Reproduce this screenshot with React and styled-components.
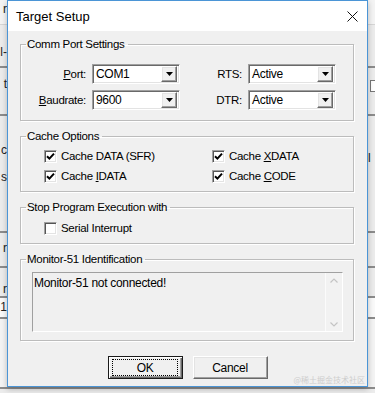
import React from 'react'
import styled, { createGlobalStyle } from 'styled-components'

const Global = createGlobalStyle`
  html, body { margin: 0; padding: 0; }
  body {
    width: 375px;
    height: 393px;
    overflow: hidden;
    background: #ececec;
    font-family: "Liberation Sans", Arial, sans-serif;
    font-size: 11.5px;
    letter-spacing: -0.3px;
  }
`;

const Desk = styled.div`
  position: relative;
  width: 375px;
  height: 393px;
  overflow: hidden;
`;

/* the window behind the dialog, only its edges show */
const Backdrop = styled.div`
  display: flex;
  flex-direction: column;
  height: 100%;
`;

const BackRow = styled.div`
  display: flex;
  justify-content: space-between;
  height: ${p => p.h}px;
  flex: none;
  box-sizing: border-box;
  background: ${p => p.bg || '#ececec'};
  border-bottom: ${p => p.line ? '2px solid #8c8c8c' : '1px solid #d6d6d6'};
  font-size: 12px;
  letter-spacing: 0;
  color: #222;
`;

const Edge = styled.div`
  width: 7px;
  overflow: hidden;
  display: flex;
  flex-direction: column;
  align-items: ${p => p.right ? 'flex-start' : 'flex-end'};
  padding-top: ${p => p.top || 0}px;
  gap: ${p => p.gap || 0}px;
  line-height: 13px;
`;

const BackBox = styled.span`
  display: inline-block;
  width: 10px;
  height: 10px;
  margin-left: 2px;
  border: 1px solid #777;
  background: #fff;
`;

const Dialog = styled.div`
  position: absolute;
  left: 7px;
  top: 0;
  width: 361px;
  height: 387px;
  box-sizing: border-box;
  border: 1px solid #4b95d6;
  background: #f0f0f0;
  display: flex;
  flex-direction: column;
  box-shadow: 0 2px 6px rgba(0, 0, 0, 0.25);
`;

const TitleBar = styled.div`
  height: 30px;
  flex: none;
  background: #fff;
  display: flex;
  align-items: center;
  justify-content: space-between;
  padding: 0 9px 0 8px;
`;

const Title = styled.span`
  font-size: 13px;
  letter-spacing: 0;
  color: #000;
`;

const Body = styled.div`
  flex: 1;
  display: flex;
  flex-direction: column;
  gap: 8px;
  padding: 6px 13px 0 12px;
`;

const Group = styled.fieldset`
  margin: 0;
  padding: ${p => p.top}px 0 ${p => p.bottom}px;
  border: 1px solid #bcbcbc;
  box-shadow: inset 1px 1px 0 #fff, 1px 1px 0 #fff;
  min-width: 0;
`;

const Legend = styled.legend`
  margin-left: 5px;
  padding: 0 3px 0 1px;
  line-height: 14px;
  color: #000;
`;

const Inset = styled.div`
  padding: 0 10px 0 ${p => p.left}px;
`;

const PortGrid = styled.div`
  display: grid;
  grid-template-columns: 59px 88px 56px 88px;
  column-gap: 6px;
  row-gap: 6px;
  align-items: center;
`;

const FieldLabel = styled.label`
  text-align: right;
  color: #000;
`;

const Combo = styled.div`
  display: flex;
  align-items: center;
  height: 20px;
  box-sizing: border-box;
  background: #fff;
  border: 1px solid;
  border-color: #a0a0a0 #fff #fff #a0a0a0;
  box-shadow: inset 1px 1px 0 #696969, inset -1px -1px 0 #e3e3e3;
  padding: 2px 2px 2px 3px;
`;

const ComboValue = styled.span`
  flex: 1;
  font-size: 12px;
  color: #000;
`;

const DropBtn = styled.span`
  width: 16px;
  height: 16px;
  box-sizing: border-box;
  background: #f0f0f0;
  border: 1px solid;
  border-color: #fff #696969 #696969 #fff;
  box-shadow: inset -1px -1px 0 #a0a0a0, inset 1px 1px 0 #e3e3e3;
  display: flex;
  align-items: center;
  justify-content: center;
`;

const CheckGrid = styled.div`
  display: grid;
  grid-template-columns: ${p => p.cols || '168px 1fr'};
  row-gap: 4px;
`;

const CheckRow = styled.label`
  display: flex;
  align-items: center;
  gap: 4px;
  height: 16px;
  color: #000;
`;

const Box = styled.span`
  width: 13px;
  height: 13px;
  box-sizing: border-box;
  background: #fff;
  border: 1px solid;
  border-color: #a0a0a0 #fff #fff #a0a0a0;
  box-shadow: inset 1px 1px 0 #555, inset -1px -1px 0 #e3e3e3;
  display: flex;
  align-items: center;
  justify-content: center;
  flex: none;
`;

const InfoBox = styled.div`
  display: flex;
  height: 60px;
  box-sizing: border-box;
  border: 1px solid;
  border-color: #a0a0a0 #fff #fff #a0a0a0;
  background: #f0f0f0;
`;

const InfoText = styled.div`
  flex: 1;
  padding: 3px 0 0 1px;
  font-size: 12px;
  color: #000;
`;

const ScrollTrack = styled.div`
  width: 16px;
  border-left: 1px solid #fbfbfb;
  background: #f2f2f2;
  display: flex;
  flex-direction: column;
  justify-content: space-between;
  align-items: center;
  padding: 5px 0 4px;
`;

const Buttons = styled.div`
  display: flex;
  justify-content: center;
  gap: 10px;
  margin-top: 7px;
  padding-left: 1px;
`;

const Btn = styled.button`
  width: 75px;
  height: 23px;
  box-sizing: border-box;
  padding: 0;
  font-family: inherit;
  font-size: 12px;
  letter-spacing: -0.3px;
  color: #000;
  background: #f0f0f0;
  border: 1px solid;
  border-color: ${p => p.primary ? '#1a1a1a' : '#fff #696969 #696969 #fff'};
  box-shadow: ${p => p.primary
    ? 'inset 1px 1px 0 #fff, inset -1px -1px 0 #696969, inset -2px -2px 0 #a0a0a0'
    : 'inset -1px -1px 0 #a0a0a0, inset 1px 1px 0 #e3e3e3'};
  display: flex;
  align-items: center;
  justify-content: center;
`;

const Focus = styled.span`
  display: flex;
  align-items: center;
  justify-content: center;
  width: 64px;
  height: 15px;
  border: 1px dotted #000;
`;

const Watermark = styled.span`
  position: absolute;
  right: 2px;
  bottom: 1px;
  font-family: "Noto Sans CJK SC", sans-serif;
  font-size: 8px;
  letter-spacing: 0;
  color: #cdcdcd;
`;

function Arrow() {
  return (
    <svg width="7" height="4" viewBox="0 0 7 4">
      <polygon points="0,0 7,0 3.5,4" fill="#000" />
    </svg>
  )
}

function Check() {
  return (
    <svg width="9" height="9" viewBox="0 0 9 9">
      <path d="M1 4.2 L3.4 6.6 L8 1.6" stroke="#000" strokeWidth="2" fill="none" />
    </svg>
  )
}

function Select({ value }) {
  return (
    <Combo>
      <ComboValue>{value}</ComboValue>
      <DropBtn><Arrow /></DropBtn>
    </Combo>
  )
}

function Option({ checked, children }) {
  return (
    <CheckRow>
      <Box>{checked && <Check />}</Box>
      <span>{children}</span>
    </CheckRow>
  )
}

export default function App() {
  return (
    <Desk>
      <Global />
      <Backdrop>
        <BackRow h={25} bg="#f4f4f4">
          <Edge top={3}><span>r</span></Edge><Edge right />
        </BackRow>
        <BackRow h={43} line>
          <Edge top={21}><span>l-</span></Edge><Edge right />
        </BackRow>
        <BackRow h={48} line>
          <Edge top={10}><span>t</span></Edge><Edge right top={12}><BackBox /></Edge>
        </BackRow>
        <BackRow h={117} line>
          <Edge top={28} gap={14}><span>c</span><span>s</span></Edge>
          <Edge right top={36}><span>l</span></Edge>
        </BackRow>
        <BackRow h={35} line>
          <Edge top={9}><span>r</span></Edge><Edge right />
        </BackRow>
        <BackRow h={30} line>
          <Edge top={15}><span>r</span></Edge><Edge right />
        </BackRow>
        <BackRow h={21} line bg="#fafafa">
          <Edge top={3}><span>1</span></Edge><Edge right />
        </BackRow>
        <BackRow h={70} line bg="#f4f4f4">
          <Edge /><Edge right />
        </BackRow>
      </Backdrop>

      <Dialog>
        <TitleBar>
          <Title>Target Setup</Title>
          <svg width="11" height="11" viewBox="0 0 11 11">
            <path d="M0.5 0.5 L10.5 10.5 M10.5 0.5 L0.5 10.5" stroke="#111" strokeWidth="1" />
          </svg>
        </TitleBar>
        <Body>
          <Group top={13} bottom={10}>
            <Legend>Comm Port Settings</Legend>
            <Inset left={6}>
              <PortGrid>
                <FieldLabel><u>P</u>ort:</FieldLabel>
                <Select value="COM1" />
                <FieldLabel>RTS:</FieldLabel>
                <Select value="Active" />
                <FieldLabel><u>B</u>audrate:</FieldLabel>
                <Select value="9600" />
                <FieldLabel>DTR:</FieldLabel>
                <Select value="Active" />
              </PortGrid>
            </Inset>
          </Group>

          <Group top={5} bottom={7}>
            <Legend>Cache Options</Legend>
            <Inset left={23}>
              <CheckGrid>
                <Option checked>Cache DATA (SFR)</Option>
                <Option checked>Cache <u>X</u>DATA</Option>
                <Option checked>Cache <u>I</u>DATA</Option>
                <Option checked>Cache <u>C</u>ODE</Option>
              </CheckGrid>
            </Inset>
          </Group>

          <Group top={6} bottom={7}>
            <Legend>Stop Program Execution with</Legend>
            <Inset left={23}>
              <CheckGrid cols="1fr">
                <Option>Serial Interrupt</Option>
              </CheckGrid>
            </Inset>
          </Group>

          <Group top={6} bottom={8}>
            <Legend>Monitor-51 Identification</Legend>
            <Inset left={11}>
              <InfoBox>
                <InfoText>Monitor-51 not connected!</InfoText>
                <ScrollTrack>
                  <svg width="8" height="5" viewBox="0 0 8 5">
                    <path d="M0.5 4.5 L4 1 L7.5 4.5" stroke="#c4c4c4" strokeWidth="1.2" fill="none" />
                  </svg>
                  <svg width="8" height="5" viewBox="0 0 8 5">
                    <path d="M0.5 0.5 L4 4 L7.5 0.5" stroke="#c4c4c4" strokeWidth="1.2" fill="none" />
                  </svg>
                </ScrollTrack>
              </InfoBox>
            </Inset>
          </Group>

          <Buttons>
            <Btn primary><Focus>OK</Focus></Btn>
            <Btn>Cancel</Btn>
          </Buttons>
        </Body>
        <Watermark>@稀土掘金技术社区</Watermark>
      </Dialog>
    </Desk>
  )
}
